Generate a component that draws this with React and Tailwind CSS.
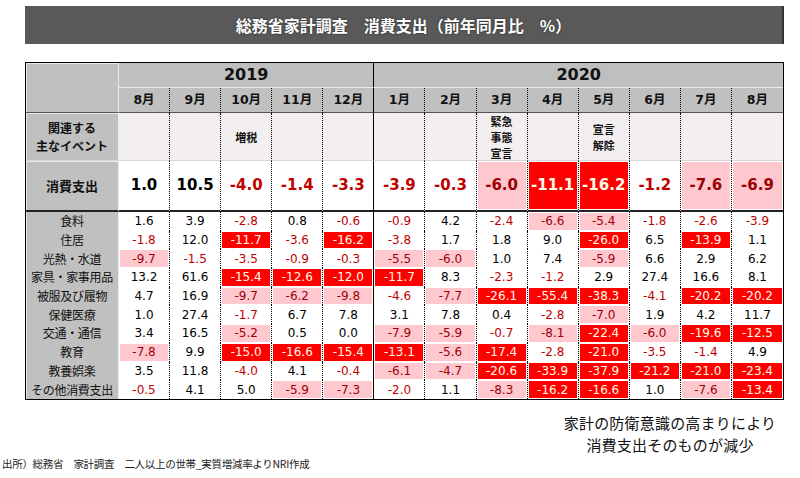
import React from 'react';

const JP = "font-['Noto_Sans_CJK_JP',sans-serif]";
const NUM = "font-['DejaVu_Sans','Noto_Sans_CJK_JP',sans-serif]";

const DOT = 'border-r border-r-black [border-right-style:dotted]';
const SOLID = 'border-r border-r-black';

const colLine = (i) => (i === 4 ? SOLID : i === 12 ? '' : DOT);

const months = ['8月', '9月', '10月', '11月', '12月', '1月', '2月', '3月', '4月', '5月', '6月', '7月', '8月'];

const events = ['', '', '増税', '', '', '', '', '緊急\n事態\n宣言', '', '宣言\n解除', '', '', ''];

const total = ['1.0', '10.5', '-4.0', '-1.4', '-3.3', '-3.9', '-0.3', '-6.0P', '-11.1R', '-16.2R', '-1.2', '-7.6P', '-6.9P'];

// P = pink cell, R = red cell
const rows = [
  ['食料', ['1.6', '3.9', '-2.8', '0.8', '-0.6', '-0.9', '4.2', '-2.4', '-6.6P', '-5.4P', '-1.8', '-2.6', '-3.9']],
  ['住居', ['-1.8', '12.0', '-11.7R', '-3.6', '-16.2R', '-3.8', '1.7', '1.8', '9.0', '-26.0R', '6.5', '-13.9R', '1.1']],
  ['光熱・水道', ['-9.7P', '-1.5', '-3.5', '-0.9', '-0.3', '-5.5P', '-6.0P', '1.0', '7.4', '-5.9P', '6.6', '2.9', '6.2']],
  ['家具・家事用品', ['13.2', '61.6', '-15.4R', '-12.6R', '-12.0R', '-11.7R', '8.3', '-2.3', '-1.2', '2.9', '27.4', '16.6', '8.1']],
  ['被服及び履物', ['4.7', '16.9', '-9.7P', '-6.2P', '-9.8P', '-4.6', '-7.7P', '-26.1R', '-55.4R', '-38.3R', '-4.1', '-20.2R', '-20.2R']],
  ['保健医療', ['1.0', '27.4', '-1.7', '6.7', '7.8', '3.1', '7.8', '0.4', '-2.8', '-7.0P', '1.9', '4.2', '11.7']],
  ['交通・通信', ['3.4', '16.5', '-5.2P', '0.5', '0.0', '-7.9P', '-5.9P', '-0.7', '-8.1P', '-22.4R', '-6.0P', '-19.6R', '-12.5R']],
  ['教育', ['-7.8P', '9.9', '-15.0R', '-16.6R', '-15.4R', '-13.1R', '-5.6P', '-17.4R', '-2.8', '-21.0R', '-3.5', '-1.4', '4.9']],
  ['教養娯楽', ['3.5', '11.8', '-4.0', '4.1', '-0.4', '-6.1P', '-4.7P', '-20.6R', '-33.9R', '-37.9R', '-21.2R', '-21.0R', '-23.4R']],
  ['その他消費支出', ['-0.5', '4.1', '5.0', '-5.9P', '-7.3P', '-2.0', '1.1', '-8.3P', '-16.2R', '-16.6R', '1.0', '-7.6P', '-13.4R']],
];

const parse = (v) => {
  const last = v[v.length - 1];
  if (last === 'P' || last === 'R') return { text: v.slice(0, -1), kind: last };
  return { text: v, kind: '' };
};

const fillClass = (kind, neg) => {
  if (kind === 'R') return 'bg-[#ff0000] text-[#fffbe8]';
  if (kind === 'P') return 'bg-[#ffc7ce] text-[#9c0006]';
  return neg ? 'text-[#c00000]' : 'text-black';
};

const DataCell = ({ value, i, big }) => {
  const { text, kind } = parse(value);
  const neg = text.startsWith('-');
  return (
    <div className={`flex p-px ${NUM} ${colLine(i)} ${big ? 'border-b-2 border-b-[#222]' : ''}`}>
      <div
        className={`flex-1 flex items-center justify-center leading-none ${fillClass(kind, neg)} ${
          big ? `text-[15px] font-bold ${!kind && neg ? 'text-[#a00000]' : ''}` : 'text-[12px]'
        }`}
      >
        {text}
      </div>
    </div>
  );
};

export default function App() {
  return (
    <div className={`w-[800px] h-[478px] bg-white overflow-hidden ${JP}`}>
      {/* Title */}
      <div className="pt-[6px] pl-[25px]">
        <div className="w-[759px] h-[38px] bg-[#595959] border-r-2 border-r-[#333] flex items-center justify-center text-white font-bold text-[16px] [text-shadow:0_0_2px_#222]">
          総務省家計調査　消費支出（前年同月比　%）
        </div>
      </div>

      {/* Table */}
      <div className="pl-[25px] pt-[18px]">
        <div className="w-[759px] border border-black grid grid-cols-[93px_repeat(13,1fr)] grid-rows-[25px_25px_48px_51px_repeat(10,18.7px)] text-[#111]">
          {/* corner */}
          <div className="row-span-2 bg-[#c0c0c0] border-r border-r-[#ececec] border-b border-b-[#555] shadow-[inset_1px_1px_0_#e8e8e8]" />
          <div className={`col-span-5 bg-[#bfbfbf] border-b border-b-[#ececec] ${SOLID} flex items-center justify-center text-[16px] font-bold ${NUM}`}>
            2019
          </div>
          <div className={`col-span-8 bg-[#bfbfbf] border-b border-b-[#ececec] flex items-center justify-center text-[16px] font-bold ${NUM}`}>
            2020
          </div>
          {months.map((m, i) => (
            <div
              key={'m' + i}
              className={`bg-[#c0c0c0] border-b border-b-[#555] ${colLine(i)} flex items-center justify-center text-[12.5px] font-bold ${NUM}`}
            >
              {m}
            </div>
          ))}

          {/* events */}
          <div className="bg-[#c0c0c0] border-r border-r-[#ececec] border-b border-b-[#d8d8d8] shadow-[inset_1px_1px_0_#e8e8e8] flex flex-col items-center justify-center text-[12px] font-bold leading-[18px]">
            <span>関連する</span>
            <span>主なイベント</span>
          </div>
          {events.map((e, i) => (
            <div
              key={'e' + i}
              className={`bg-[#f3eff0] border-b border-b-[#d8d8d8] ${colLine(i)} flex flex-col items-center justify-center text-[11px] font-bold leading-[16px]`}
            >
              {e.split('\n').map((l, j) => (
                <span key={j}>{l}</span>
              ))}
            </div>
          ))}

          {/* 消費支出 */}
          <div className="bg-[#c0c0c0] border-r border-r-[#ececec] border-b-2 border-b-[#222] shadow-[inset_1px_1px_0_#e8e8e8] flex items-center justify-center text-[13px] font-bold">
            消費支出
          </div>
          {total.map((v, i) => (
            <DataCell key={'t' + i} value={v} i={i} big />
          ))}

          {/* category labels */}
          <div className="row-span-10 bg-[#c0c0c0] border-r border-r-[#ececec] shadow-[inset_1px_0_0_#e8e8e8] grid grid-rows-[repeat(10,18.7px)] text-[12px] tracking-[-0.3px]">
            {rows.map(([name]) => (
              <div key={name} className="flex items-center justify-center whitespace-nowrap">
                {name}
              </div>
            ))}
          </div>
          {rows.map(([name, vals]) => vals.map((v, i) => <DataCell key={name + i} value={v} i={i} />))}
        </div>
      </div>

      {/* Note */}
      <div className="flex justify-end pr-[12px] pt-[12px]">
        <div className="w-[236px] text-center text-[15px] leading-[22px] text-[#111] tracking-[0.2px]">
          <div>家計の防衛意識の高まりにより</div>
          <div>消費支出そのものが減少</div>
        </div>
      </div>

      {/* Source */}
      <div className="pl-[2px] text-[10.5px] leading-[15px] text-[#222] tracking-[-0.3px]">
        出所）総務省　家計調査　二人以上の世帯_実質増減率よりNRI作成
      </div>
    </div>
  );
}
